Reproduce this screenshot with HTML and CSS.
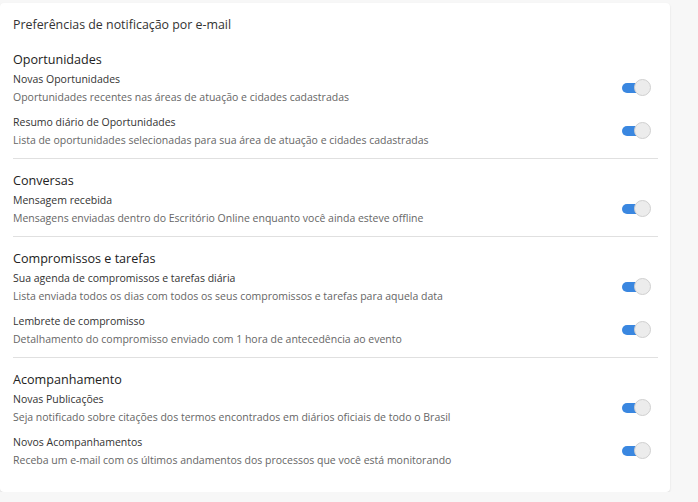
FILE: index.html
```html
<!doctype html>
<html lang="pt-BR">
<head>
	<meta charset="UTF-8">
	<title>Preferências de notificação</title>
	<link rel="stylesheet" href="styles.css">
</head>
<body>
	<div class="card">
		<h1 class="card-title">Preferências de notificação por e-mail</h1>

		<div class="group">
			<h2 class="group-title">Oportunidades</h2>
			<div class="item">
				<div class="item-text">
					<div class="item-name">Novas Oportunidades</div>
					<div class="item-desc">Oportunidades recentes nas áreas de atuação e cidades cadastradas</div>
				</div>
				<label class="switch"><input type="checkbox" checked><span class="track"></span></label>
			</div>
			<div class="item">
				<div class="item-text">
					<div class="item-name">Resumo diário de Oportunidades</div>
					<div class="item-desc">Lista de oportunidades selecionadas para sua área de atuação e cidades cadastradas</div>
				</div>
				<label class="switch"><input type="checkbox" checked><span class="track"></span></label>
			</div>
		</div>

		<div class="group">
			<h2 class="group-title">Conversas</h2>
			<div class="item">
				<div class="item-text">
					<div class="item-name">Mensagem recebida</div>
					<div class="item-desc">Mensagens enviadas dentro do Escritório Online enquanto você ainda esteve offline</div>
				</div>
				<label class="switch"><input type="checkbox" checked><span class="track"></span></label>
			</div>
		</div>

		<div class="group">
			<h2 class="group-title">Compromissos e tarefas</h2>
			<div class="item">
				<div class="item-text">
					<div class="item-name">Sua agenda de compromissos e tarefas diária</div>
					<div class="item-desc">Lista enviada todos os dias com todos os seus compromissos e tarefas para aquela data</div>
				</div>
				<label class="switch"><input type="checkbox" checked><span class="track"></span></label>
			</div>
			<div class="item">
				<div class="item-text">
					<div class="item-name">Lembrete de compromisso</div>
					<div class="item-desc">Detalhamento do compromisso enviado com 1 hora de antecedência ao evento</div>
				</div>
				<label class="switch"><input type="checkbox" checked><span class="track"></span></label>
			</div>
		</div>

		<div class="group">
			<h2 class="group-title">Acompanhamento</h2>
			<div class="item">
				<div class="item-text">
					<div class="item-name">Novas Publicações</div>
					<div class="item-desc">Seja notificado sobre citações dos termos encontrados em diários oficiais de todo o Brasil</div>
				</div>
				<label class="switch"><input type="checkbox" checked><span class="track"></span></label>
			</div>
			<div class="item">
				<div class="item-text">
					<div class="item-name">Novos Acompanhamentos</div>
					<div class="item-desc">Receba um e-mail com os últimos andamentos dos processos que você está monitorando</div>
				</div>
				<label class="switch"><input type="checkbox" checked><span class="track"></span></label>
			</div>
		</div>
	</div>
</body>
</html>
```

FILE: styles.css
```css
body,h1,h2,div{
	margin:0;
	padding:0;
}
body{
	background:#f7f7f7;
	font:400 10.5px/18px "Open Sans", "Liberation Sans", sans-serif;
	color:#333;
	padding:3px 28px 0 0;
}
.card{
	background:#fff;
	border-radius:4px;
	box-shadow:0 1px 2px rgba(0,0,0,.12);
	padding:13px 12px 16px 13px;
}
.card-title{
	font-size:12.4px;
	font-weight:400;
	line-height:18px;
	color:#333;
	margin-bottom:17px;
}
.group{
	border-bottom:1px solid #e0e0e0;
	padding-bottom:2px;
	margin-bottom:13px;
}
.group:last-child{
	border-bottom:0;
	padding-bottom:0;
	margin-bottom:0;
}
.group-title{
	font-size:12.6px;
	font-weight:500;
	line-height:18px;
	color:#222;
	margin-bottom:1px;
}
.item{
	display:flex;
	align-items:center;
	justify-content:space-between;
	padding-bottom:7px;
}
.item-name{
	color:#333;
}
.item-desc{
	color:#666;
}
.switch{
	position:relative;
	width:29px;
	height:16px;
	margin-right:7px;
	flex-shrink:0;
}
.switch input{
	display:none;
}
.track{
	position:absolute;
	left:0;
	top:3px;
	width:22px;
	height:10px;
	border-radius:5px;
	background:#3a87e0;
}
.track:after{
	content:"";
	position:absolute;
	right:-7px;
	top:-4px;
	width:15px;
	height:15px;
	border-radius:50%;
	background:#ececec;
	border:1px solid #d0d0d0;
}
```
